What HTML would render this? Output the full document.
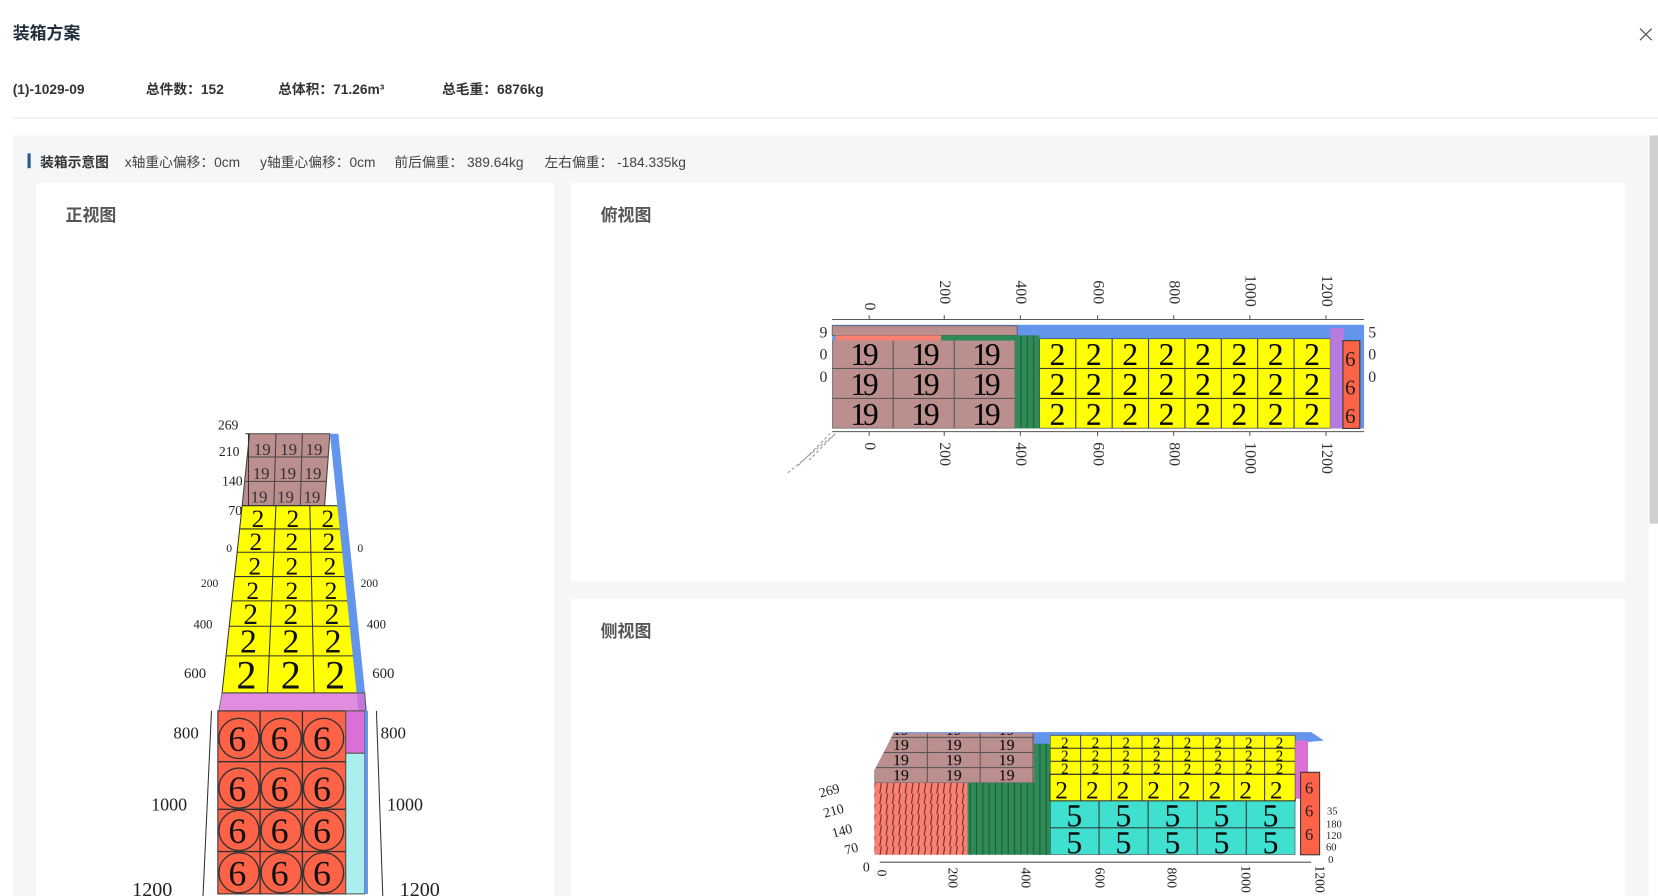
<!DOCTYPE html>
<html><head><meta charset="utf-8"><style>
html,body{margin:0;padding:0;width:1658px;height:896px;overflow:hidden;background:#fff;}
#w{position:absolute;left:0;top:0;width:1568px;height:847px;transform:scale(1.0574,1.0579);transform-origin:0 0;font-family:"Liberation Sans","Noto Sans CJK SC",sans-serif;color:#333;}
.a{position:absolute;white-space:nowrap;line-height:1;}
.t{font-size:16px;font-weight:bold;color:#1f2d3d;}
.i{font-size:13px;font-weight:bold;color:#333;top:78px;}
.h{font-size:13px;color:#444;top:147px;}
.card{position:absolute;background:#fff;}
.ct{position:absolute;left:28px;top:24px;font-size:16px;font-weight:bold;color:#555;line-height:1;}
svg text{font-family:"Liberation Serif",serif;}
</style></head><body><div id="w">
<div class="a t" style="left:12px;top:25px">装箱方案</div>
<svg class="a" style="left:1550px;top:26px" width="13" height="13"><path d="M1 1L12 12M12 1L1 12" stroke="#555" stroke-width="1.2"/></svg>
<div class="a i" style="left:12px">(1)-1029-09</div>
<div class="a i" style="left:138px">总件数：152</div>
<div class="a i" style="left:263px">总体积：71.26m³</div>
<div class="a i" style="left:418px">总毛重：6876kg</div>
<div class="a" style="left:12px;top:111px;width:1556px;height:1px;background:#e6e6e6"></div>
<div class="a" style="left:12px;top:128px;width:1547px;height:719px;background:#f5f6f8"></div>
<div class="a" style="left:1560px;top:128px;width:8px;height:367px;background:#cfcfcf"></div>
<div class="a" style="left:26px;top:145px;width:3px;height:14px;background:#2a5a8a"></div>
<div class="a h" style="left:38px;font-weight:bold;color:#333">装箱示意图</div>
<div class="a h" style="left:118px">x轴重心偏移：0cm</div>
<div class="a h" style="left:246px">y轴重心偏移：0cm</div>
<div class="a h" style="left:373px">前后偏重： 389.64kg</div>
<div class="a h" style="left:515px">左右偏重： -184.335kg</div>

<div class="card" style="left:34px;top:173px;width:490px;height:674px"><div class="ct">正视图</div></div>
<div class="card" style="left:540px;top:173px;width:997px;height:376px"><div class="ct">俯视图</div></div>
<div class="card" style="left:540px;top:566px;width:997px;height:281px"><div class="ct">侧视图</div></div>

<svg class="a" style="left:0;top:0" width="1568" height="847">
<defs>
<pattern id="py" width="34.4" height="28.3" patternUnits="userSpaceOnUse" x="983" y="320"><rect width="34.4" height="28.3" fill="#ffff00" stroke="#333" stroke-width="1"/><text x="17" y="25" font-size="30" text-anchor="middle">2</text></pattern>
<pattern id="pb" width="57.7" height="28.3" patternUnits="userSpaceOnUse" x="787" y="320"><rect width="57.7" height="28.3" fill="#bc8f8f" stroke="#555" stroke-width="1"/><text x="29" y="25" font-size="30" text-anchor="middle" letter-spacing="-3">19</text></pattern>
<pattern id="pg" width="6" height="10" patternUnits="userSpaceOnUse"><rect width="6" height="10" fill="#2e8b57"/><path d="M5.5 0V10" stroke="#1d5a37"/></pattern>
<pattern id="pr" width="6" height="10" patternUnits="userSpaceOnUse"><rect width="6" height="10" fill="#fa8072"/><path d="M5.5 0L4 10" stroke="#6a2a22"/></pattern>
<pattern id="pc" width="46.4" height="25.5" patternUnits="userSpaceOnUse" x="993" y="757"><rect width="46.4" height="25.5" fill="#40e0d0" stroke="#333"/><text x="23" y="24" font-size="30" text-anchor="middle">5</text></pattern>
<pattern id="py2" width="29" height="12.3" patternUnits="userSpaceOnUse" x="993" y="695"><rect width="29" height="12.3" fill="#ffff00" stroke="#333"/><text x="14" y="12" font-size="14" text-anchor="middle">2</text></pattern>
<pattern id="pb2" width="50" height="14.3" patternUnits="userSpaceOnUse" x="827" y="697"><rect width="50" height="14.3" fill="#bc8f8f" stroke="#555"/><text x="25" y="12" font-size="15" text-anchor="middle">19</text></pattern>
</defs>
<!-- top view -->
<g stroke="#555" stroke-width="1"><path d="M787 302H1290"/><path d="M787 408H1290"/></g>
<g stroke="#555"><path d="M822 302v-4M893 302v-4M965 302v-4M1038 302v-4M1110 302v-4M1182 302v-4M1254 302v-4M822 408v4M893 408v4M965 408v4M1038 408v4M1110 408v4M1182 408v4M1254 408v4"/></g>
<g font-size="15" fill="#333">
<text transform="translate(818,286) rotate(90)">0</text><text transform="translate(889,265) rotate(90)">200</text><text transform="translate(961,265) rotate(90)">400</text><text transform="translate(1034,265) rotate(90)">600</text><text transform="translate(1106,265) rotate(90)">800</text><text transform="translate(1178,260) rotate(90)">1000</text><text transform="translate(1250,260) rotate(90)">1200</text>
<text transform="translate(818,418) rotate(90)">0</text><text transform="translate(889,418) rotate(90)">200</text><text transform="translate(961,418) rotate(90)">400</text><text transform="translate(1034,418) rotate(90)">600</text><text transform="translate(1106,418) rotate(90)">800</text><text transform="translate(1178,418) rotate(90)">1000</text><text transform="translate(1250,418) rotate(90)">1200</text>
<text x="775" y="319" font-family="Liberation Sans">9</text><text x="775" y="361" font-family="Liberation Sans">0</text><text x="775" y="340" font-family="Liberation Sans">0</text>
<text x="1294" y="319" font-family="Liberation Sans">5</text><text x="1294" y="340" font-family="Liberation Sans">0</text><text x="1294" y="361" font-family="Liberation Sans">0</text>
</g>
<rect x="787" y="307" width="503" height="98" fill="#6495ed"/>
<rect x="787" y="308" width="175" height="9" fill="#bc8f8f" stroke="#555" stroke-width=".7"/>
<rect x="790" y="317" width="100" height="5" fill="#fa8072"/><rect x="890" y="317" width="70" height="5" fill="#2e8b57"/>
<rect x="787" y="322" width="173" height="83" fill="url(#pb)"/>
<rect x="960" y="317" width="23" height="88" fill="url(#pg)"/>
<rect x="983" y="320" width="275" height="85" fill="url(#py)"/>
<rect x="1258" y="310" width="13" height="95" fill="#da70d6" opacity=".7"/>
<rect x="1270" y="322" width="16" height="83" fill="#ff6347" stroke="#333"/>
<g font-size="20" fill="#222"><text x="1272" y="346">6</text><text x="1272" y="373">6</text><text x="1272" y="400">6</text></g>
<path d="M745 447L790 410M755 440l30-30M765 435l25-25" stroke="#999" stroke-dasharray="3 2"/>

<!-- front view -->
<polygon points="236,410 312,410 307,478 229,478" fill="#bc8f8f" stroke="#444"/>
<g stroke="#444" fill="none"><path d="M261 410l-2 68M286 410l-2 68M234 432h76M232 455h77"/></g>
<g font-size="16" fill="#333"><text x="240" y="430">19</text><text x="265" y="430">19</text><text x="289" y="430">19</text><text x="239" y="453">19</text><text x="264" y="453">19</text><text x="288" y="453">19</text><text x="237" y="475">19</text><text x="262" y="475">19</text><text x="287" y="475">19</text></g>
<polygon points="229,478 325,478 340,655 210,655" fill="#ffff00" stroke="#333"/>
<g stroke="#333" fill="none"><path d="M261 478l-8 177M293 478l4 177M227 500h100M224 522h105M222 545h109M220 568h112M217 592h116M214 620h121"/></g>
<g fill="#111" text-anchor="middle">
<g font-size="24"><text x="244" y="498">2</text><text x="277" y="498">2</text><text x="310" y="498">2</text>
<text x="242" y="520">2</text><text x="276" y="520">2</text><text x="311" y="520">2</text>
<text x="241" y="543">2</text><text x="276" y="543">2</text><text x="312" y="543">2</text>
<text x="239" y="566">2</text><text x="276" y="566">2</text><text x="313" y="566">2</text></g>
<g font-size="28"><text x="237" y="590">2</text><text x="275" y="590">2</text><text x="314" y="590">2</text></g>
<g font-size="32"><text x="235" y="617">2</text><text x="275" y="617">2</text><text x="315" y="617">2</text></g>
<g font-size="38"><text x="233" y="651">2</text><text x="275" y="651">2</text><text x="317" y="651">2</text></g>
</g>
<polygon points="312,410 320,410 347,672 339,672" fill="#6495ed"/>
<polygon points="210,655 345,655 346,672 207,672" fill="#da70d6" stroke="#555" opacity=".8"/>
<rect x="206" y="672" width="121" height="173" fill="#ff6347" stroke="#333"/>
<g stroke="#333" fill="none" stroke-width="1.3"><circle cx="226" cy="698" r="19"/><circle cx="266" cy="698" r="19"/><circle cx="306" cy="698" r="19"/><circle cx="226" cy="745" r="19"/><circle cx="266" cy="745" r="19"/><circle cx="306" cy="745" r="19"/><circle cx="226" cy="785" r="19"/><circle cx="266" cy="785" r="19"/><circle cx="306" cy="785" r="19"/><circle cx="226" cy="825" r="19"/><circle cx="266" cy="825" r="19"/><circle cx="306" cy="825" r="19"/><path d="M246 672v173M286 672v173M206 720h121M206 765h121M206 805h121"/></g>
<g font-size="34" fill="#111"><text x="216" y="710">6</text><text x="256" y="710">6</text><text x="296" y="710">6</text><text x="216" y="757">6</text><text x="256" y="757">6</text><text x="296" y="757">6</text><text x="216" y="797">6</text><text x="256" y="797">6</text><text x="296" y="797">6</text><text x="216" y="837">6</text><text x="256" y="837">6</text><text x="296" y="837">6</text></g>
<rect x="327" y="672" width="18" height="40" fill="#da70d6" stroke="#555"/>
<rect x="327" y="712" width="18" height="133" fill="#aee" stroke="#555"/>
<rect x="345" y="672" width="3" height="173" fill="#6495ed"/>
<g font-size="13" fill="#222" font-family="Liberation Sans">
<text x="206" y="406">269</text><text x="207" y="431">210</text><text x="210" y="459">140</text><text x="216" y="487">70</text>
<text x="214" y="522" font-size="11">0</text><text x="190" y="555" font-size="11">200</text><text x="183" y="594" font-size="12">400</text><text x="174" y="641" font-size="14">600</text><text x="164" y="698" font-size="16">800</text><text x="143" y="766" font-size="17">1000</text><text x="125" y="847" font-size="19">1200</text>
<text x="338" y="522" font-size="11">0</text><text x="341" y="555" font-size="11">200</text><text x="347" y="594" font-size="12">400</text><text x="352" y="641" font-size="14">600</text><text x="360" y="698" font-size="16">800</text><text x="366" y="766" font-size="17">1000</text><text x="378" y="847" font-size="19">1200</text>
</g>
<g stroke="#333" fill="none"><path d="M232 410h3v68M200 672l-8 175M356 672l6 175"/></g>

<!-- side view -->
<polygon points="845,692 1240,692 1252,700 827,740" fill="#6495ed"/>
<polygon points="845,693 978,693 978,740 827,740 827,728" fill="url(#pb2)"/>
<rect x="978" y="693" width="15" height="10" fill="#6495ed"/>
<rect x="978" y="703" width="15" height="105" fill="url(#pg)"/>
<rect x="827" y="740" width="88" height="68" fill="url(#pr)"/>
<rect x="915" y="740" width="78" height="68" fill="url(#pg)"/>
<rect x="993" y="695" width="232" height="37" fill="url(#py2)"/>
<rect x="993" y="732" width="232" height="25" fill="#ffff00" stroke="#333"/>
<g font-size="24" fill="#111"><text x="998" y="755">2</text><text x="1027" y="755">2</text><text x="1056" y="755">2</text><text x="1085" y="755">2</text><text x="1114" y="755">2</text><text x="1143" y="755">2</text><text x="1172" y="755">2</text><text x="1201" y="755">2</text></g>
<g stroke="#333"><path d="M1022 732v25M1051 732v25M1080 732v25M1109 732v25M1138 732v25M1167 732v25M1196 732v25"/></g>
<rect x="993" y="757" width="232" height="51" fill="url(#pc)"/>
<rect x="1225" y="700" width="12" height="55" fill="#da70d6"/>
<rect x="1230" y="730" width="18" height="78" fill="#ff6347" stroke="#333"/>
<g font-size="16" fill="#222"><text x="1234" y="750">6</text><text x="1234" y="772">6</text><text x="1234" y="794">6</text></g>
<path d="M832 815H1240" stroke="#555"/>
<g font-size="13" fill="#222" font-family="Liberation Sans">
<text transform="translate(776,754) rotate(-15)">269</text><text transform="translate(780,773) rotate(-15)">210</text><text transform="translate(788,792) rotate(-15)">140</text><text transform="translate(800,808) rotate(-15)">70</text><text x="816" y="824">0</text>
<text transform="translate(830,822) rotate(90)">0</text><text transform="translate(897,820) rotate(90)">200</text><text transform="translate(966,820) rotate(90)">400</text><text transform="translate(1036,820) rotate(90)">600</text><text transform="translate(1104,820) rotate(90)">800</text><text transform="translate(1174,818) rotate(90)">1000</text><text transform="translate(1244,818) rotate(90)">1200</text>
<text x="1255" y="770" font-size="10">35</text><text x="1254" y="782" font-size="10">180</text><text x="1254" y="793" font-size="10">120</text><text x="1254" y="804" font-size="10">60</text><text x="1256" y="816" font-size="10">0</text>
</g>
</svg>
</div></body></html>
